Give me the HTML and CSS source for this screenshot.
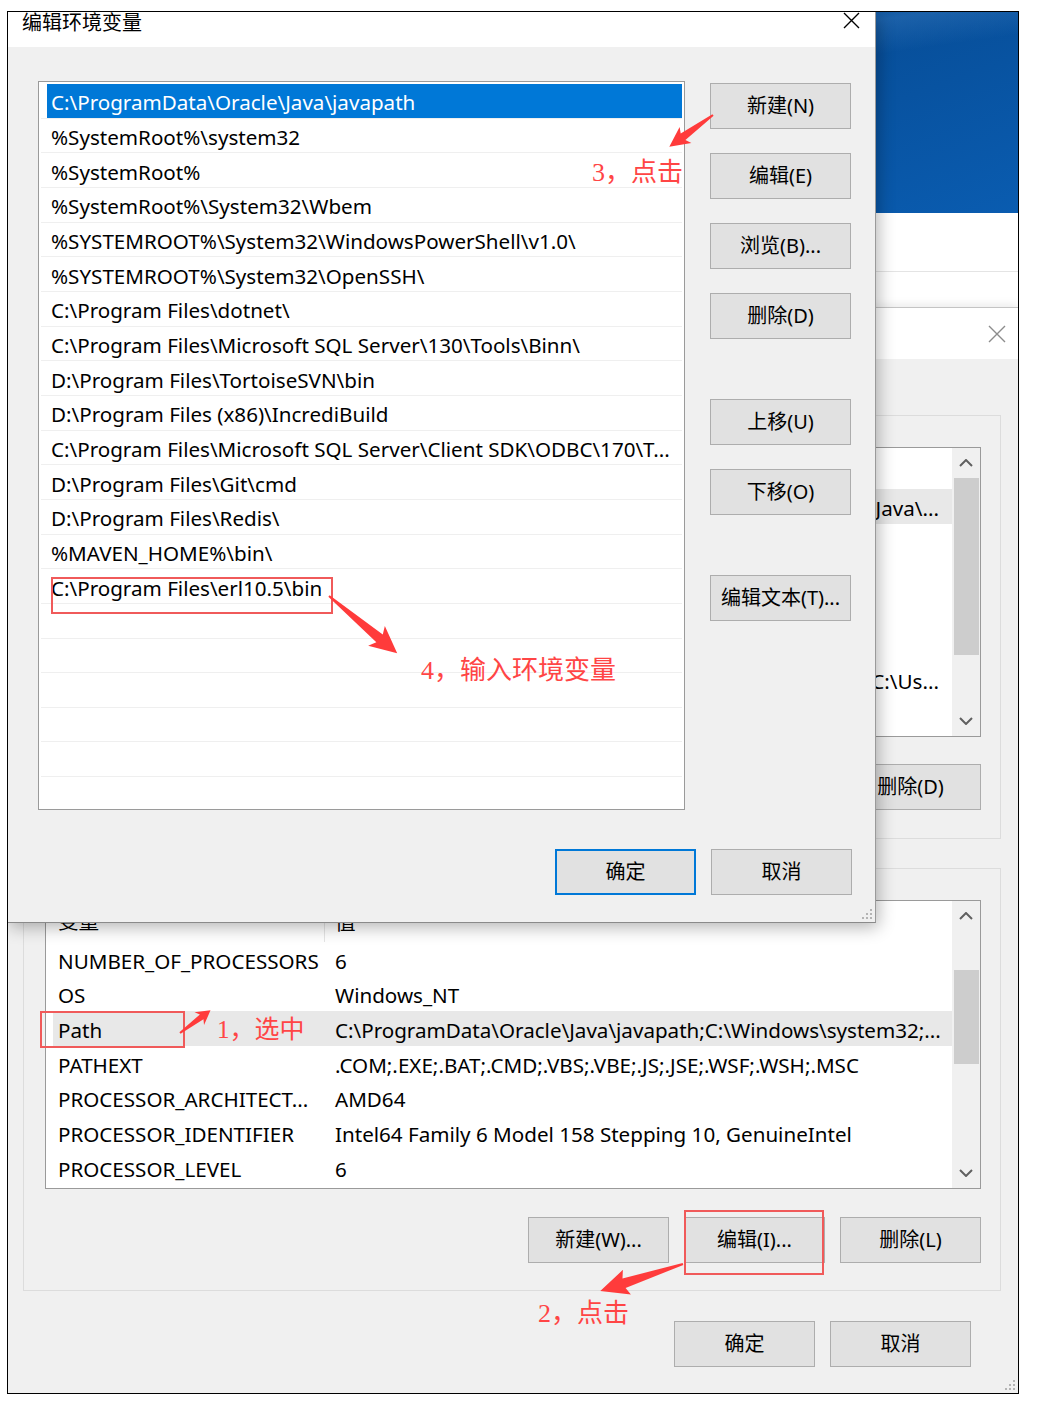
FILE: index.html
```html
<!DOCTYPE html>
<html lang="zh-CN">
<head>
    <meta charset="UTF-8">
    <title>编辑环境变量</title>
    <link rel="stylesheet" href="styles.css">
</head>
<body>
<div class="screen">

    <!-- fond : bureau + fenêtres derrière -->
    <div class="desktop"></div>
    <div class="backwin"><div class="backwin-line"></div></div>

    <!-- fenêtre "环境变量" (en partie cachée) -->
    <div class="envwin">
        <div class="env-title">
            <svg class="close close-grey" width="18" height="18" viewBox="0 0 18 18"><path d="M1 1 L17 17 M17 1 L1 17"/></svg>
        </div>
        <div class="env-body">
            <div class="group">
                <div class="var-list">
                    <div class="var-table">
                        <div class="var-head"><div class="c-name"></div><div class="c-val"></div></div>
                        <div class="var-rows">
                            <div class="var-row hl"><div class="c-name"></div><div class="c-val tail">\Java\...</div></div>
                            <div class="var-row"><div class="c-name"></div><div class="c-val"></div></div>
                            <div class="var-row"><div class="c-name"></div><div class="c-val"></div></div>
                            <div class="var-row"><div class="c-name"></div><div class="c-val"></div></div>
                            <div class="var-row"><div class="c-name"></div><div class="c-val"></div></div>
                            <div class="var-row"><div class="c-name"></div><div class="c-val tail">C:\Us...</div></div>
                        </div>
                    </div>
                    <div class="scrollbar">
                        <div class="sb-btn"><svg width="14" height="8" viewBox="0 0 14 8"><polyline points="1,7 7,1 13,7"/></svg></div>
                        <div class="sb-track"><div class="sb-thumb thumb-user"></div></div>
                        <div class="sb-btn"><svg width="14" height="8" viewBox="0 0 14 8"><polyline points="1,1 7,7 13,1"/></svg></div>
                    </div>
                </div>
                <div class="btn-row">
                    <div class="btn"></div>
                    <div class="btn"></div>
                    <div class="btn">删除(D)</div>
                </div>
            </div>

            <div class="group group-sys">
                <div class="var-list list-sys">
                    <div class="var-table">
                        <div class="var-head"><div class="c-name">变量</div><div class="c-val">值</div></div>
                        <div class="var-rows">
                            <div class="var-row"><div class="c-name">NUMBER_OF_PROCESSORS</div><div class="c-val">6</div></div>
                            <div class="var-row"><div class="c-name">OS</div><div class="c-val">Windows_NT</div></div>
                            <div class="var-row hl"><div class="c-name">Path</div><div class="c-val">C:\ProgramData\Oracle\Java\javapath;C:\Windows\system32;...</div></div>
                            <div class="var-row"><div class="c-name">PATHEXT</div><div class="c-val">.COM;.EXE;.BAT;.CMD;.VBS;.VBE;.JS;.JSE;.WSF;.WSH;.MSC</div></div>
                            <div class="var-row"><div class="c-name">PROCESSOR_ARCHITECT...</div><div class="c-val">AMD64</div></div>
                            <div class="var-row"><div class="c-name">PROCESSOR_IDENTIFIER</div><div class="c-val">Intel64 Family 6 Model 158 Stepping 10, GenuineIntel</div></div>
                            <div class="var-row"><div class="c-name">PROCESSOR_LEVEL</div><div class="c-val">6</div></div>
                        </div>
                    </div>
                    <div class="scrollbar">
                        <div class="sb-btn"><svg width="14" height="8" viewBox="0 0 14 8"><polyline points="1,7 7,1 13,7"/></svg></div>
                        <div class="sb-track"><div class="sb-thumb thumb-sys"></div></div>
                        <div class="sb-btn"><svg width="14" height="8" viewBox="0 0 14 8"><polyline points="1,1 7,7 13,1"/></svg></div>
                    </div>
                </div>
                <div class="btn-row">
                    <div class="btn">新建(W)...</div>
                    <div class="btn">编辑(I)...</div>
                    <div class="btn">删除(L)</div>
                </div>
            </div>

            <div class="btn-row env-foot">
                <div class="btn">确定</div>
                <div class="btn">取消</div>
            </div>
        </div>
        <svg class="grip grip-env" width="12" height="12" viewBox="0 0 12 12"><rect x="9" y="1" width="2" height="2"/><rect x="5" y="5" width="2" height="2"/><rect x="9" y="5" width="2" height="2"/><rect x="1" y="9" width="2" height="2"/><rect x="5" y="9" width="2" height="2"/><rect x="9" y="9" width="2" height="2"/></svg>
    </div>

    <!-- boîte de dialogue "编辑环境变量" -->
    <div class="editdlg">
        <div class="edit-title">
            <div class="edit-caption">编辑环境变量</div>
            <svg class="close" width="17" height="17" viewBox="0 0 17 17"><path d="M1 1 L16 16 M16 1 L1 16"/></svg>
        </div>
        <div class="edit-body">
            <div class="edit-main">
                <div class="path-list">
                    <div class="path-row sel">C:\ProgramData\Oracle\Java\javapath</div>
                    <div class="path-row">%SystemRoot%\system32</div>
                    <div class="path-row">%SystemRoot%</div>
                    <div class="path-row">%SystemRoot%\System32\Wbem</div>
                    <div class="path-row">%SYSTEMROOT%\System32\WindowsPowerShell\v1.0\</div>
                    <div class="path-row">%SYSTEMROOT%\System32\OpenSSH\</div>
                    <div class="path-row">C:\Program Files\dotnet\</div>
                    <div class="path-row">C:\Program Files\Microsoft SQL Server\130\Tools\Binn\</div>
                    <div class="path-row">D:\Program Files\TortoiseSVN\bin</div>
                    <div class="path-row">D:\Program Files (x86)\IncrediBuild</div>
                    <div class="path-row">C:\Program Files\Microsoft SQL Server\Client SDK\ODBC\170\T...</div>
                    <div class="path-row">D:\Program Files\Git\cmd</div>
                    <div class="path-row">D:\Program Files\Redis\</div>
                    <div class="path-row">%MAVEN_HOME%\bin\</div>
                    <div class="path-row">C:\Program Files\erl10.5\bin</div>
                    <div class="path-row"></div>
                    <div class="path-row"></div>
                    <div class="path-row"></div>
                    <div class="path-row"></div>
                    <div class="path-row"></div>
                    <div class="path-row"></div>
                </div>
                <div class="side">
                    <div class="btn">新建(N)</div>
                    <div class="btn">编辑(E)</div>
                    <div class="btn">浏览(B)...</div>
                    <div class="btn">删除(D)</div>
                    <div class="btn btn-sep">上移(U)</div>
                    <div class="btn">下移(O)</div>
                    <div class="btn btn-sep">编辑文本(T)...</div>
                </div>
            </div>
            <div class="btn-row edit-foot">
                <div class="btn btn-default">确定</div>
                <div class="btn">取消</div>
            </div>
        </div>
        <svg class="grip grip-edit" width="12" height="12" viewBox="0 0 12 12"><rect x="9" y="1" width="2" height="2"/><rect x="5" y="5" width="2" height="2"/><rect x="9" y="5" width="2" height="2"/><rect x="1" y="9" width="2" height="2"/><rect x="5" y="9" width="2" height="2"/><rect x="9" y="9" width="2" height="2"/></svg>
    </div>

    <!-- annotations rouges -->
    <div class="mark mark-erl"></div>
    <div class="mark mark-path"></div>
    <div class="mark mark-edit"></div>

    <div class="note note-3">3，点击</div>
    <div class="note note-4">4，输入环境变量</div>
    <div class="note note-1">1，选中</div>
    <div class="note note-2">2，点击</div>

    <svg class="arrows" width="1041" height="1409" viewBox="0 0 1041 1409">
        <polygon transform="translate(713,115) rotate(144)" points="0,-1 37,-4 34,-10 54,0 34,10 37,4 0,1"/>
        <polygon transform="translate(329,596) rotate(40)" points="0,-1 66,-5 62,-13 89,0 62,13 66,5 0,1"/>
        <polygon transform="translate(180,1033) rotate(-36.6)" points="0,-1 27,-3 24,-8 38,0 24,8 27,3 0,1"/>
        <polygon transform="translate(683,1264) rotate(162)" points="0,-1 62,-5 59,-13 87,0 59,13 62,5 0,1"/>
    </svg>
</div>
</body>
</html>
```

FILE: styles.css
```css
body {
    margin: 0;
    background: #fff;
    font-family: "Noto Sans", "Noto Sans CJK SC", sans-serif;
    font-size: 20.6px;
    color: #000;
}

.screen {
    position: relative;
    margin: 11px 0 0 7px;
    width: 1010px;
    height: 1381px;
    border: 1px solid #000;
    overflow: hidden;
}

/* fond */
.desktop {
    position: absolute;
    top: 0;
    left: 0;
    right: 0;
    height: 201px;
    background:
        linear-gradient(172deg, rgba(255,255,255,0) 30%, rgba(120,180,240,0.18) 38%, rgba(255,255,255,0) 48%),
        linear-gradient(160deg, #062c56 0%, #064a92 45%, #0a5cb0 100%);
}

.backwin {
    position: absolute;
    top: 201px;
    left: 0;
    right: 0;
    bottom: 0;
    background: #fff;
}

.backwin-line {
    height: 58px;
    border-bottom: 1px solid #e4e4e4;
}

/* fenêtre 环境变量 */
.envwin {
    position: absolute;
    top: 295px;
    left: 0;
    right: 0;
    bottom: 0;
    background: #f0f0f0;
    border-top: 1px solid #c4c4c4;
    box-shadow: 0 -3px 8px rgba(0,0,0,0.08);
}

.env-title {
    height: 51px;
    background: #fff;
    display: flex;
    justify-content: flex-end;
    align-items: center;
    padding-right: 12px;
}

.close path {
    stroke: #000;
    stroke-width: 1.4;
    fill: none;
}

.close-grey path {
    stroke: #8c8c8c;
}

.env-body {
    padding: 56px 17px 0 15px;
}

.group {
    border: 1px solid #dcdcdc;
    padding: 31px 19px 28px 21px;
}

.group-sys {
    margin-top: 29px;
    padding-bottom: 27px;
}

.var-list {
    height: 290px;
    box-sizing: border-box;
    border: 1px solid #9a9a9a;
    background: #fff;
    display: flex;
    overflow: hidden;
}

.list-sys {
    height: 289px;
}

.var-table {
    flex: 1;
    min-width: 0;
}

.var-head {
    height: 41px;
    display: flex;
    align-items: center;
}

.var-head .c-name {
    width: 266px;
    flex-shrink: 0;
    padding-left: 12px;
    height: 41px;
    line-height: 41px;
    border-right: 1px solid #e5e5e5;
}

.var-head .c-val {
    padding-left: 10px;
    line-height: 28px;
}

.var-rows {
    padding-left: 7px;
}

.var-row {
    height: 34.67px;
    box-sizing: border-box;
    padding-top: 3px;
    display: flex;
    align-items: center;
    line-height: 28px;
    white-space: nowrap;
}

.var-row.hl {
    background: #e8e8e8;
}

.var-row .c-name {
    width: 266px;
    flex-shrink: 0;
    padding-left: 5px;
}

.var-row .c-val {
    flex: 1;
    padding-left: 11px;
}

.var-row .tail {
    text-align: right;
    padding-right: 13px;
}

.scrollbar {
    width: 28px;
    flex-shrink: 0;
    background: #f0f0f0;
    display: flex;
    flex-direction: column;
}

.sb-btn {
    height: 30px;
    display: flex;
    align-items: center;
    justify-content: center;
}

.sb-btn polyline {
    fill: none;
    stroke: #606060;
    stroke-width: 2;
}

.sb-track {
    flex: 1;
}

.sb-thumb {
    margin: 0 1px 0 2px;
    background: #cdcdcd;
}

.thumb-user {
    height: 177px;
}

.thumb-sys {
    margin-top: 39px;
    height: 94px;
}

.btn-row {
    display: flex;
    justify-content: flex-end;
    gap: 15px;
    margin-top: 27px;
}

.group-sys .btn-row {
    margin-top: 28px;
}

.env-foot {
    margin-top: 30px;
    margin-right: 30px;
}

.btn {
    width: 141px;
    height: 46px;
    box-sizing: border-box;
    background: #e1e1e1;
    border: 1px solid #adadad;
    display: flex;
    align-items: center;
    justify-content: center;
    font-size: 20px;
    line-height: 28px;
    white-space: nowrap;
}

.btn-default {
    border: 2px solid #0078d7;
}

.grip {
    position: absolute;
    right: 2px;
    bottom: 2px;
}

.grip rect {
    fill: #b4b4b4;
}

/* boîte 编辑环境变量 */
.editdlg {
    position: absolute;
    top: 0;
    left: 0;
    width: 867px;
    height: 910px;
    border-right: 1px solid #9a9a9a;
    border-bottom: 1px solid #8a8a8a;
    background: #f0f0f0;
    box-shadow: 2px 4px 16px rgba(0,0,0,0.3);
}

.edit-title {
    height: 35px;
    background: #fff;
    display: flex;
    justify-content: space-between;
    align-items: flex-start;
    padding: 0 14px;
}

.edit-caption {
    font-size: 20px;
    line-height: 22px;
}

.edit-title .close {
    margin-right: 1px;
}

.edit-body {
    padding: 34px 23px 0 30px;
}

.edit-main {
    display: flex;
}

.path-list {
    width: 647px;
    height: 729px;
    box-sizing: border-box;
    border: 1px solid #9a9a9a;
    background: #fff;
    padding: 2px 2px 0 2px;
    overflow: hidden;
}

.path-row {
    height: 34.67px;
    box-sizing: border-box;
    border-bottom: 1px solid #efefef;
    padding: 3px 0 0 10px;
    display: flex;
    align-items: center;
    line-height: 28px;
    white-space: nowrap;
}

.path-row.sel {
    background: linear-gradient(90deg, transparent 6px, #0078d7 6px);
    color: #fff;
}

.side {
    margin-left: 25px;
    display: flex;
    flex-direction: column;
    gap: 24px;
    padding-top: 2px;
}

.side .btn-sep {
    margin-top: 36px;
}

.edit-foot {
    margin-top: 39px;
}

/* annotations */
.mark {
    position: absolute;
    border: 2px solid #f05a5a;
    box-sizing: border-box;
}

.mark-erl {
    left: 43px;
    top: 565px;
    width: 282px;
    height: 37px;
}

.mark-path {
    left: 32px;
    top: 999px;
    width: 145px;
    height: 37px;
}

.mark-edit {
    left: 676px;
    top: 1198px;
    width: 140px;
    height: 65px;
}

.note {
    position: absolute;
    font-family: "Liberation Serif", "Noto Sans CJK SC", serif;
    font-size: 26px;
    line-height: 30px;
    color: #ff4545;
    white-space: nowrap;
}

.note-3 { left: 584px; top: 146px; }
.note-4 { left: 413px; top: 644px; }
.note-1 { left: 209px; top: 1003px; font-size: 25px; }
.note-2 { left: 530px; top: 1287px; }

.arrows {
    position: absolute;
    left: -8px;
    top: -12px;
    pointer-events: none;
}

.arrows polygon {
    fill: #ff3b3b;
}
```
